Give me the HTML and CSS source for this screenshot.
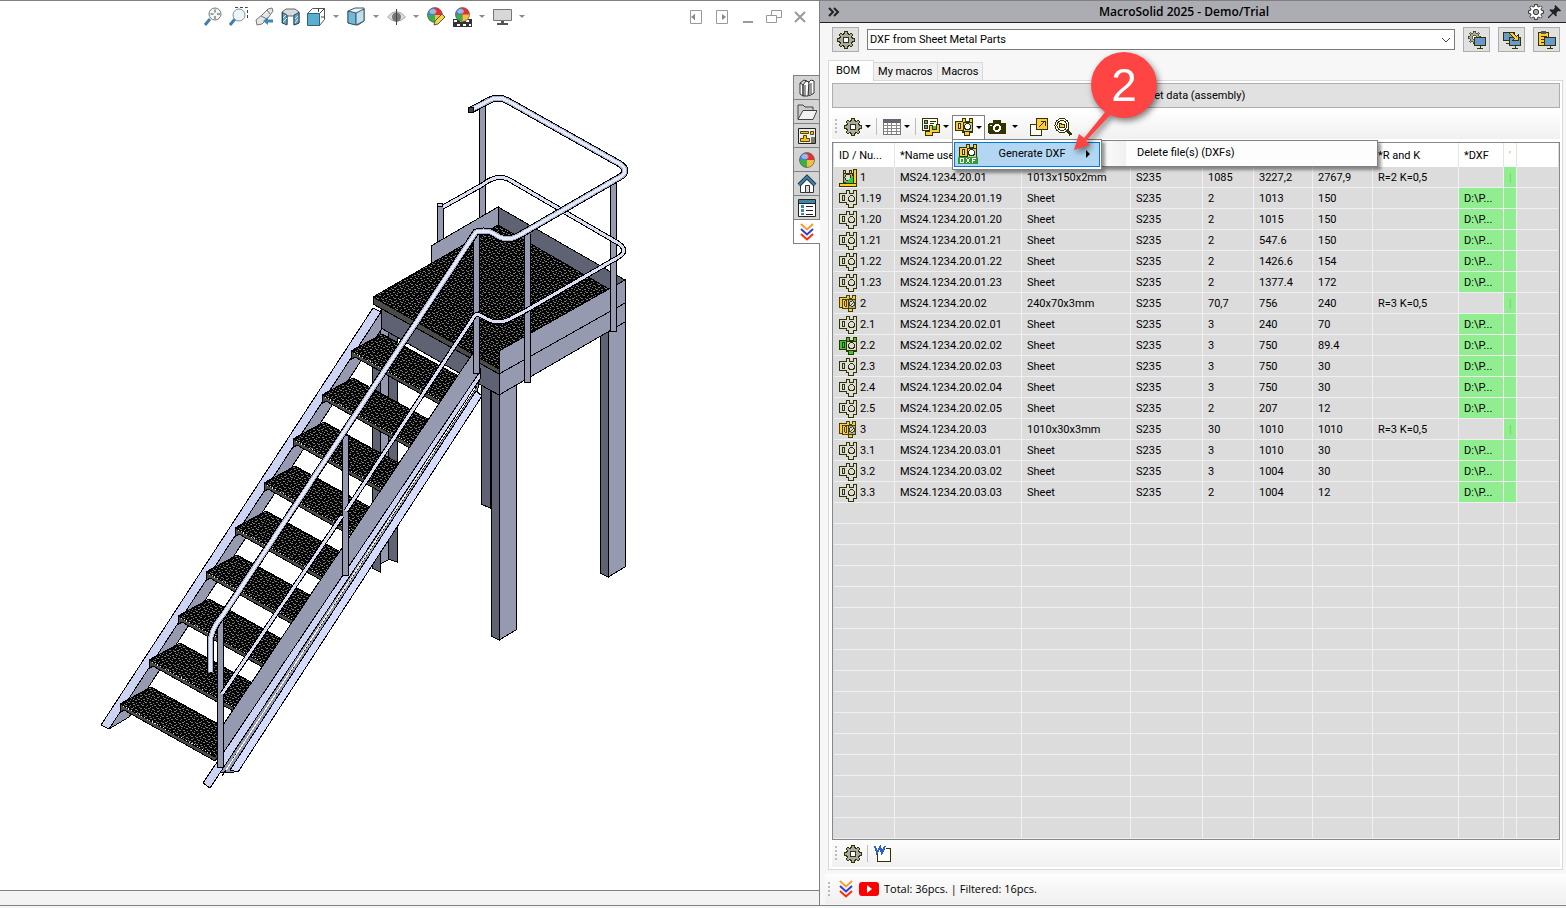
FILE: index.html
```html
<!DOCTYPE html>
<html lang="en">
<head>
  <meta charset="UTF-8">
  <title>MacroSolid 2025 - Demo/Trial</title>
  <link rel="stylesheet" href="styles.css">
</head>
<body>
  <svg class="defs" aria-hidden="true">
    <defs>
      <symbol id="gear" viewBox="0 0 18 18">
        <path fill="#a9a9a9" stroke="#333300" d="M7.500 2.500V.5h3v2l2 1 1.500-1.500 2 2-1.500 1.500 1 2h2v3h-2l-1 2 1.500 1.500-2 2-1.500-1.500-2 1v2h-3v-2l-2-1L4 16l-2-2 1.500-1.500-1-2h-2v-3h2l1-2L2 4l2-2 1.500 1.500z"/>
        <circle cx="9" cy="9" r="3" fill="#fff" stroke="#333300"/>
      </symbol>
      <symbol id="part" viewBox="0 0 18 18">
        <path class="body" d="M.5 3.500h7v-3h3v3h4v-3h3v14h-3v3h-5v-3h-2v-2h-7z"/>
        <path class="line" d="M3.500 5.500h2v5h-2z"/>
        <circle class="line" cx="12.500" cy="8.500" r="3"/>
      </symbol>
      <symbol id="part-green" viewBox="0 0 18 18">
        <path fill="#33cc33" stroke="#333300" d="M.5 3.500h7v-3h3v3h4v-3h3v14h-3v3h-5v-3h-2v-2h-7z"/>
        <path fill="#dcdcdc" stroke="#333300" d="M7.500 4.500h10v9h-10z"/>
        <path class="line" d="M3.500 5.500h2v5h-2z"/>
        <circle class="line" cx="12.500" cy="8.500" r="3"/>
      </symbol>
      <symbol id="part-group" viewBox="0 0 20 20">
        <path fill="#ffcc33" stroke="#333300" d="M.5 2.500h8v-2h3v3h3v-3h4v14h-3v4h-5v-4h-7v-1h-3z"/>
        <path fill="none" stroke="#333300" d="M3.500 14V4.500h6M6.500 6.500h2v6h-2z"/>
        <path fill="#a9a9a9" stroke="#333300" d="M10.500 4.500h8v10h-8z"/>
        <circle cx="14.500" cy="9.500" r="3" fill="#dcdcdc" stroke="#333300"/>
        <path stroke="#333300" d="M13 11l3-3"/>
      </symbol>
      <symbol id="part-main" viewBox="0 0 18 18">
        <path fill="#a9a9a9" stroke="#333300" d="M4.500 4.500h9v9h-9z"/>
        <path fill="#ffcc33" stroke="#333300" d="M4.500 1.500h2v3h-2zM10.500 1.500h2v3h-2zM14.500.5h3v14h-3zM.5 14.500h17v3H.5z"/>
        <path fill="#33cc33" d="M14 6v8H6z"/>
        <circle cx="9" cy="8.500" r="3" fill="#dcdcdc" stroke="#333300"/>
        <path fill="#33cc33" d="M12 8v4H8z"/>
      </symbol>
      <symbol id="dxf-part" viewBox="0 0 18 18">
        <path fill="#ffcc33" stroke="#333300" d="M.5 3.500h7v-3h3v3h4v-3h3v14h-3v3h-5v-3h-2v-2h-7z"/>
        <path fill="#c8c8b8" stroke="#333300" d="M8.500 4.500h9v9h-9z"/>
        <path fill="#ffe9a0" stroke="#333300" d="M3.500 5.500h2v5h-2z"/>
        <circle cx="12.500" cy="8.500" r="3" fill="#fff" stroke="#333300"/>
      </symbol>
      <symbol id="chevrons" viewBox="0 0 14 18">
        <path fill="none" stroke="#ff9a2e" stroke-width="2" d="M1 1l6 5.500L13 1"/>
        <path fill="none" stroke="#2b3fd0" stroke-width="2" d="M1 6l6 5.500L13 6"/>
        <path fill="none" stroke="#ff2a0a" stroke-width="2" d="M1 11l6 5.500L13 11"/>
      </symbol>
      <symbol id="ball" viewBox="0 0 16 16">
        <circle cx="8" cy="8" r="7.500" fill="#d33"/>
        <path fill="#3f86d8" d="M8 8L7.500.5A7.500 7.500 0 0 0 .5 8z"/>
        <path fill="#36b04a" d="M8 8H.5A7.500 7.500 0 0 0 8 15.500z"/>
        <path fill="#f0c040" d="M8 8v7.500A7.500 7.500 0 0 0 15.500 8z"/>
        <ellipse cx="6" cy="4.500" rx="3.500" ry="2.500" fill="#fff" opacity=".45"/>
        <circle cx="8" cy="8" r="7.500" fill="none" stroke="#555" opacity=".6"/>
      </symbol>
      <symbol id="monitor" viewBox="0 0 12 12">
        <path fill="#6699cc" stroke="#333300" d="M.5.5h11v8H.5z"/>
        <path fill="none" stroke="#333300" d="M6 9v2M3 11.500h6"/>
      </symbol>
      <pattern id="grating" width="17" height="14" patternUnits="userSpaceOnUse">
        <rect width="17" height="14" fill="#060606"/>
        <path stroke="#7d7d7d" fill="none" d="M0 1.500h2M4 .5h1M5 1.500h2M10 1.500h1M13 .5h2M9 2.500h1M15 2.500h1M2 3.500h1M3 4.500h2M7 4.500h1M11 4.500h2M13 3.500h1M8 5.500h2M15 5.500h2M0 6.500h1M5 6.500h1M12 6.500h1M3 7.500h2M9 7.500h1M10 8.500h2M14 7.500h1M0 8.500h1M1 9.500h2M6 9.500h2M13 9.500h1M15 10.500h2M4 10.500h1M10 10.500h1M7 11.500h1M8 12.500h2M2 12.500h2M12 12.500h2M6 13.500h1M16 13.500h1"/>
      </pattern>
      <!-- one stair tread, repeated up the flight -->
      <g id="tread">
        <path fill="#4b4b48" stroke="#000" d="M0 0v9l4-3 91 51 6-9z"/>
        <path fill="url(#grating)" stroke="#000" d="M0 0l31-17 80 44-16 26z"/>
        <path fill="none" stroke="#e4e4da" stroke-dasharray="1 2" d="M3 2l90 49"/>
      </g>
    </defs>
  </svg>

  <div class="app">
    <main class="viewport">
      <div class="view-bar">
        <div class="view-tools">
          <button class="view-btn" aria-label="Zoom to fit"><svg viewBox="0 0 19 20"><path stroke="#3f7fae" stroke-width="3" d="M2 18l5-6"/><circle cx="12" cy="7" r="6" fill="#f2f6f8" stroke="#777"/><path stroke="#444" fill="none" d="M12 2.500v3M12 9v3M7.500 7h3M14 7h3"/></svg></button>
          <button class="view-btn" aria-label="Zoom to area"><svg viewBox="0 0 19 20"><path fill="none" stroke="#444" stroke-dasharray="3 2" d="M6 .5h12.500v11"/><path stroke="#3f7fae" stroke-width="3" d="M1 18l5-6"/><circle cx="10" cy="8" r="6" fill="#edf5fa" stroke="#8a9499"/></svg></button>
          <button class="view-btn" aria-label="Previous view"><svg viewBox="0 0 19 20"><path fill="#e6e6e6" stroke="#777" d="M1 13l6-5 6-6 4-1 1 3-5 7-6 6-5 1z"/><path stroke="#777" d="M6 9l6 3M12 3l3 4"/><path fill="#3f86b4" d="M18 12.500h-5V10l-5 4 5 4v-2.500h5z"/></svg></button>
          <button class="view-btn" aria-label="Section view"><svg viewBox="0 0 19 20"><path fill="#d8dadb" stroke="#666" d="M1 5l4-3h9l4 3v11l-5 2V9H6v8l-5-1z"/><path fill="#5aa9cd" stroke="#345" d="M1.500 5.500L6 8v10l-4.500-2zM13 8l5-2.500V16l-5 2z"/><path stroke="#cfe8f3" d="M2 11l3-3M2 15l4-4M14 12l3-3M14 16l3-4"/></svg></button>
          <button class="view-btn" aria-label="View orientation"><svg viewBox="0 0 19 20"><path fill="#fff" stroke="#555" d="M.5 6.500l5-5h12v11l-5 6"/><path fill="#5aaed2" stroke="#2e617c" d="M.5 6.500h12v12H.5z"/><path fill="none" stroke="#444" d="M12.500 6.500l5-5M11.500 1v4M14 10h4"/></svg></button>
          <button class="drop-btn" aria-label="View orientation options"></button>
          <button class="view-btn" aria-label="Display style"><svg viewBox="0 0 19 20"><path fill="#e8f4f9" stroke="#456" d="M1 4l7-3h9v13l-6 4-10-2z"/><path fill="#6cbbdb" stroke="#456" d="M1 4l8 2v12l-8-2z"/><path fill="#bfe0ee" stroke="#456" d="M9 6l8-4v12l-8 4z"/></svg></button>
          <button class="drop-btn" aria-label="Display style options"></button>
          <button class="view-btn" aria-label="Hide/show items"><svg viewBox="0 0 19 20"><path fill="#ddd" stroke="#aaa" d="M.5 10q9-11 18 0-9 9-18 0z"/><circle cx="9.500" cy="10" r="4.500" fill="#777"/><path stroke="#444" d="M9.500 2v16"/></svg></button>
          <button class="drop-btn" aria-label="Hide/show options"></button>
          <button class="view-btn" aria-label="Edit appearance"><svg viewBox="0 0 19 20"><use href="#ball" width="16" height="16"/><path fill="#f5d34d" stroke="#554" d="M7 18l1-4 7-7 3 3-7 7z"/></svg></button>
          <button class="view-btn" aria-label="Apply scene"><svg viewBox="0 0 19 20"><path fill="#333" d="M0 12h19v8H0z"/><path stroke="#fff" stroke-width="2" stroke-dasharray="3 3" d="M1 14h18M4 18h14"/><use href="#ball" x="2" width="15" height="15"/></svg></button>
          <button class="drop-btn" aria-label="Scene options"></button>
          <button class="view-btn" aria-label="View settings"><svg viewBox="0 0 19 20"><path fill="#d5d7d8" stroke="#777" d="M.5 2.500h18v11H.5z"/><path fill="#555" d="M8 14h3v2h4v2H4v-2h4z"/></svg></button>
          <button class="drop-btn" aria-label="View settings options"></button>
        </div>
        <div class="window-tools">
          <button class="win-btn" aria-label="Previous window"><svg viewBox="0 0 16 16"><path d="M2.500 1.500h11v13h-11zM6.500 5v6"/><path class="solid" d="M3 8l4-3v6z"/></svg></button>
          <button class="win-btn" aria-label="Next window"><svg viewBox="0 0 16 16"><path d="M2.500 1.500h11v13h-11z"/><path class="solid" d="M12 8L8 5v6z"/></svg></button>
          <button class="win-btn" aria-label="Minimize"><svg viewBox="0 0 16 16"><path stroke-width="2" d="M3 13h10"/></svg></button>
          <button class="win-btn" aria-label="Restore"><svg viewBox="0 0 16 16"><path d="M.5 6.500h10v7H.5zM5.500 6V1.500h10v7h-5"/></svg></button>
          <button class="win-btn" aria-label="Close"><svg viewBox="0 0 16 16"><path stroke-width="2" d="M3 3l10 10M13 3L3 13"/></svg></button>
        </div>
      </div>

      <div class="canvas">
        <svg class="model" viewBox="0 32 819 858" role="img" aria-label="Staircase with platform">
          <!-- legs -->
          <g class="edge">
            <path fill="#5f6273" d="M372 320h8v252l-8-4z"/>
            <path fill="#959ab0" d="M380 320h8v240l-8 4z"/>
            <path fill="#5f6273" d="M388 320h9v242l-9-3z"/>
            <path fill="#5f6273" d="M481 380h9v128l-9-4z"/>
            <path fill="#5f6273" d="M600 330h8v247l-8-4z"/>
            <path fill="#959ab0" d="M608 325l17-10v252l-17 10z"/>
            <path fill="#5f6273" d="M491 385h8v255l-8-4z"/>
            <path fill="#959ab0" d="M499 385h17v245l-17 10z"/>
          </g>

          <g class="pole"><path d="M482 104v120M440 206v50"/></g>
          <g class="pole-fill"><path d="M482 104v120M440 206v50"/></g>

          <!-- platform -->
          <g class="edge">
            <path fill="#959ab0" d="M431 246l67-39v19l-67 38z"/>
            <path fill="#5f6273" d="M498 207l127 73-16 10-111-65z"/>
            <path fill="#5f6273" d="M381 304l118 70v21l-38-21-80-46z"/>
            <path fill="#4b4b48" d="M373 297v7l126 70v-6z"/>
            <path fill="url(#grating)" d="M373 297l125-72 111 64-110 80z"/>
            <path fill="#959ab0" d="M499 351l126-71v23l-126 71z"/>
            <path fill="#959ab0" d="M499 374l126-71v19l-126 73z"/>
          </g>

          <!-- left stringer -->
          <g class="edge">
            <path fill="#959ab0" d="M109 729l20-12 252-387v-20z"/>
            <path fill="#cdd3f2" d="M101 725L373 308l8 4-272 417z"/>
          </g>

          <use href="#tread" x="351" y="351"/>
          <use href="#tread" x="322" y="395"/>
          <use href="#tread" x="293" y="439"/>
          <use href="#tread" x="264" y="483"/>
          <use href="#tread" x="235" y="528"/>
          <use href="#tread" x="206" y="572"/>
          <use href="#tread" x="178" y="616"/>
          <use href="#tread" x="149" y="660"/>
          <use href="#tread" x="120" y="704"/>

          <!-- right stringer -->
          <g class="edge">
            <path fill="#959ab0" d="M219 731L473 353l8 17-4 24-243 378h-15z"/>
            <path fill="#cdd3f2" d="M203 783L481 370l-1 9-270 409z"/>
            <path fill="none" d="M222 776L477 386"/>
            <path fill="#d5dcfb" d="M230 770L476 391l6 5-244 376z"/>
            <path fill="none" stroke="#fff" d="M226 770L475 388"/>
          </g>

          <!-- posts and rails, dark outline first, then the lit tube -->
          <g class="pole"><path d="M613 182v150M527 234v149M476 234v140M345 436v140M220 620v148"/></g>
          <g class="pole-fill"><path d="M613 182v149M527 234v148M476 234v139M345 436v139M220 620v147"/></g>
          <g class="rail-thin">
            <path id="mid-rail" d="M443 207l39-22 6-4q10-6 20-2l110 64q12 8-1 15l-90 52-17 9q-12 6-23 0l-9-5-3 1-129 196M342 516L222 694"/>
          </g>
          <g class="rail-thin-fill"><use href="#mid-rail"/></g>
          <g class="rail">
            <path id="top-rail" d="M471 110l17-9q10-6 20 0l112 63q10 7 0 13l-102 59q-12 6-22-1-8-6-20-3L223 615q-13 15-13 30v27"/>
          </g>
          <g class="rail-body"><use href="#top-rail"/></g>
          <g class="rail-light"><use href="#top-rail"/></g>
          <circle cx="471" cy="110" r="3" fill="#444" stroke="#000"/>
          <ellipse cx="440" cy="205" rx="3" ry="2" fill="#cdd3f2" stroke="#000"/>
        </svg>

        <nav class="side-tabs">
          <button aria-label="Design library"><svg viewBox="0 0 20 20"><path fill="#fff" stroke="#333" d="M3 5l3 2v11l-3-2zM6 7l3-4 3 1-1 14-5 0zM11 5l3-3 3 1v12l-5 3"/><path fill="none" stroke="#333" d="M3 5l4-3 3 1M8 7v11M12 6v12M14 5v11"/></svg></button>
          <button aria-label="File explorer"><svg viewBox="0 0 20 20"><path fill="#ccc" stroke="#444" d="M1 17V3h5l2 2h8v3"/><path fill="#f2f2f2" stroke="#444" d="M1 17.500L6 8.500h14l-4 9z"/></svg></button>
          <button aria-label="View palette"><svg viewBox="0 0 20 20"><path fill="#eee" stroke="#222" d="M1.500 2.500h17v15h-17z"/><path fill="#f5c518" stroke="#554400" d="M3.500 5.500h8v2h-8zM13.500 5.500h3v3h-3zM6.500 9.500h3v3h3v3h-9v-3h3z"/><path fill="#777" d="M14 11h4v6h-4z"/></svg></button>
          <button aria-label="Appearances"><svg viewBox="0 0 20 20"><use href="#ball" x="2" y="2" width="16" height="16"/></svg></button>
          <button aria-label="Home"><svg viewBox="0 0 20 20"><path fill="#fff" stroke="#333" d="M3.500 9.500L10 4l6.500 5.500v9h-13z"/><path fill="#ddd" stroke="#333" d="M8.500 11.500h4v7h-4z"/><path fill="none" stroke="#234" stroke-width="4" d="M2 11l8-8 8 8"/><path fill="none" stroke="#3c86a8" stroke-width="2" d="M2 11l8-8 8 8"/></svg></button>
          <button aria-label="Custom properties"><svg viewBox="0 0 20 20"><path fill="#fff" stroke="#222" d="M1.500 1.500h17v17h-17z"/><path fill="#3c86a8" d="M2 2h16v3H2zM4 7h3v3H4zM4 11h3v3H4zM4 15h3v2H4z"/><path stroke="#222" d="M2 5.500h16M9 8.500h7M9 12.500h7M9 16.500h7"/></svg></button>
          <button class="current" aria-label="MacroSolid"><svg viewBox="0 0 20 20"><use href="#chevrons" x="3" y="1" width="14" height="18"/></svg></button>
        </nav>
      </div>
      <div class="view-footer"></div>
    </main>

    <aside class="panel">
      <header class="title-bar">
        <button class="plain" aria-label="Collapse"><svg viewBox="0 0 12 10"><path fill="none" stroke="#222" stroke-width="2" d="M1 1l4 4-4 4M6 1l4 4-4 4"/></svg></button>
        <h1>MacroSolid 2025 - Demo/Trial</h1>
        <button class="plain" aria-label="Options"><svg class="cog" viewBox="0 0 18 18"><path fill="#fff" stroke="#222" d="M7.500 2.500V.5h3v2l2 1 1.500-1.500 2 2-1.500 1.500 1 2h2v3h-2l-1 2 1.500 1.500-2 2-1.500-1.500-2 1v2h-3v-2l-2-1L4 16l-2-2 1.500-1.500-1-2h-2v-3h2l1-2L2 4l2-2 1.500 1.500z"/><circle cx="9" cy="9" r="3" fill="#abadb3" stroke="#222"/></svg></button>
        <button class="plain" aria-label="Pin"><svg class="pin" viewBox="0 0 14 14"><path fill="#222" d="M8 0l6 6-1 1-2-.5-2 2 .5 3-1 1L5.500 9.500 1 14H0v-1l4.500-4.500L1.500 5.500l1-1 3 .5 2-2L7 1z"/></svg></button>
      </header>

      <div class="task-row">
        <button class="tool-square" aria-label="Macro settings"><svg class="i18"><use href="#gear"/></svg></button>
        <div class="combo">
          <select aria-label="Macro"><option>DXF from Sheet Metal Parts</option></select>
          <svg viewBox="0 0 10 6"><path fill="none" stroke="#444" d="M1 1l4 4 4-4"/></svg>
        </div>
        <button class="tool-square" aria-label="Screen settings"><svg viewBox="0 0 18 18" class="i18"><use href="#gear" width="13" height="13"/><use href="#monitor" x="6" y="6" width="12" height="12"/></svg></button>
        <button class="tool-square" aria-label="Send to screen"><svg viewBox="0 0 18 18" class="i18"><use href="#monitor" y="1" width="12" height="12"/><use href="#monitor" x="6" y="6" width="12" height="12"/><path fill="#ffcc33" stroke="#333300" d="M6.500 1.500h3l4 4 2-2v6h-6l2-2-5-5z"/></svg></button>
        <button class="tool-square" aria-label="Paste to screen"><svg viewBox="0 0 18 18" class="i18"><path fill="#ffcc33" stroke="#333300" d="M.5 1.500h10v13H.5z"/><path fill="#555" d="M3 0h5v3H3z"/><path stroke="#333300" d="M3 5.500h6M3 8.500h4M3 11.500h3"/><use href="#monitor" x="6" y="6" width="12" height="12"/></svg></button>
      </div>

      <div class="tabs" role="tablist">
        <button class="tab active" role="tab" aria-selected="true">BOM</button>
        <button class="tab" role="tab">My macros</button>
        <button class="tab" role="tab">Macros</button>
      </div>

      <section class="tab-page">
        <button class="get-data">Get data (assembly)</button>

        <div class="toolbar">
          <span class="grip"></span>
          <button class="tool has-drop" aria-label="Settings"><svg class="i18"><use href="#gear"/></svg></button>
          <span class="sep"></span>
          <button class="tool has-drop" aria-label="Table"><svg class="i18" viewBox="0 0 18 18"><path fill="#fff" stroke="#777" d="M.5 1.500h17v15H.5z"/><path fill="#66666e" d="M0 1h18v4H0z"/><path stroke="#888" d="M1 7.500h16M1 10.500h16M1 13.500h16M4.500 5v11M8.500 5v11M13.500 5v11"/></svg></button>
          <span class="sep"></span>
          <button class="tool has-drop" aria-label="Part list"><svg class="i18" viewBox="0 0 18 18"><path fill="#fff" stroke="#333300" d="M.5.5h15v12H.5z"/><path fill="#6699cc" stroke="#333300" d="M2.500 2.500h3v3h-3zM2.500 7.500h3v3h-3z"/><path stroke="#333300" d="M8 3.500h6M8 5.500h4"/><path fill="#33cc33" d="M10 8h5v4h-5z"/><path fill="#ffcc33" stroke="#333300" d="M7.500 7.500h3v4h4v-5h3v8h-7v3h-7v-4h4z"/></svg></button>
          <div class="drop-host">
            <button class="tool has-drop open" aria-label="DXF" aria-expanded="true"><svg class="i18"><use href="#dxf-part"/></svg></button>
            <div class="menu">
              <button class="menu-item">
                <svg viewBox="0 0 20 20"><use href="#dxf-part" x="1" width="18" height="18"/><path fill="#2f9e2f" d="M0 13h20v7H0z"/><path fill="none" stroke="#fff" d="M2 14.500h3.500v4H2zM8 14l4 5M12 14l-4 5M14.500 19v-4.500H18M14.500 16.500H17"/></svg>
                <span>Generate DXF</span>
                <i></i>
              </button>
            </div>
            <div class="submenu">
              <button class="menu-item">Delete file(s) (DXFs)</button>
            </div>
          </div>
          <button class="tool has-drop wide" aria-label="Camera"><svg class="i18" viewBox="0 0 18 18"><path fill="#333300" d="M5 2h8v3h4l1 1v9l-1 1H1l-1-1V6l1-1h4z"/><circle cx="9" cy="10" r="4" fill="#fff"/><circle cx="9" cy="10" r="2" fill="#333300"/><path fill="#fff" d="M2 7h2v1H2z"/></svg></button>
          <button class="tool" aria-label="Open folder"><svg class="i18" viewBox="0 0 18 18"><path fill="#fff" stroke="#333300" d="M.5 6.500h11v11H.5z"/><path fill="#ffcc33" stroke="#333300" d="M6.500.5h11v11h-11z"/><path fill="none" stroke="#333300" d="M9 9l6-6M11 3.500h4v4"/></svg></button>
          <button class="tool" aria-label="Find part"><svg class="i18" viewBox="0 0 18 18"><circle cx="8" cy="7.500" r="7" fill="#fff" stroke="#333300"/><circle cx="8" cy="7.500" r="5" fill="#fff" stroke="#333300"/><path fill="#ffcc33" stroke="#333300" d="M5.500 9.500v-4h2v1h3v3z"/><path stroke="#333300" stroke-width="3" d="M13 12l4 5"/></svg></button>
        </div>

        <div class="grid">
          <table>
            <colgroup>
              <col class="c-id"><col class="c-name"><col class="c-desc"><col class="c-mat"><col class="c-qty"><col class="c-len"><col class="c-wid"><col class="c-rk"><col class="c-dxf"><col class="c-flag"><col>
            </colgroup>
            <thead>
              <tr><th>ID / Nu...</th><th>*Name used</th><th></th><th></th><th></th><th></th><th></th><th>*R and K</th><th>*DXF</th><th class="flag">'</th><th></th></tr>
            </thead>
            <tbody id="rows"></tbody>
          </table>
        </div>

        <div class="toolbar bottom">
          <span class="grip"></span>
          <button class="tool" aria-label="List settings"><svg class="i18"><use href="#gear"/></svg></button>
          <span class="sep"></span>
          <button class="tool" aria-label="Export to Word"><svg class="i18" viewBox="0 0 18 18"><path fill="#fff" stroke="#333300" d="M3.500 3.500h13v13h-13z"/><path fill="#fff" d="M0 0h12v9H0z"/><path fill="none" stroke="#2f5fc8" stroke-width="2" d="M1 1l2 7 3-6 2 6 3-7"/></svg></button>
        </div>
      </section>

      <footer class="status">
        <span class="grip"></span>
        <a href="#" aria-label="MacroSolid"><svg class="brand"><use href="#chevrons"/></svg></a>
        <a href="#" aria-label="YouTube"><svg class="tube" viewBox="0 0 20 14"><rect width="20" height="14" rx="3" fill="#f00"/><path fill="#fff" d="M8 3l5 4-5 4z"/></svg></a>
        <span>Total: 36pcs. | Filtered: 16pcs.</span>
      </footer>

      <div class="callout">
        <svg viewBox="0 0 90 110"><path fill="#ff4444" d="M32 59l-22 27-5-4-5 16 16-5-4-4 26-28z"/></svg>
        <span>2</span>
      </div>
    </aside>
  </div>
  <script src="script.js"></script>
</body>
</html>
```
FILE: styles.css
```css
* {
  box-sizing: border-box;
}

body {
  margin: 0;
  background: #fff;
  color: #000;
  font-family: Roboto, "Liberation Sans", sans-serif;
  font-size: 11px;
  line-height: 16px;
}

button {
  margin: 0;
  padding: 0;
  border: none;
  background: none;
  color: inherit;
  font: inherit;
}

svg {
  display: block;
  flex: none;
}

.defs {
  position: absolute;
  width: 0;
  height: 0;
}

.i18 {
  width: 18px;
  height: 18px;
  shape-rendering: crispEdges;
}

.app {
  display: grid;
  grid-template-columns: 820fr 746fr;
  height: 100vh;
  border-top: 1px solid #808080;
  background: #f7f7f7;
}

/* 3D view */
.viewport {
  display: flex;
  flex-direction: column;
  min-width: 0;
  margin-bottom: 2px;
  border-right: 1px solid #808080;
  border-bottom: 1px solid #808080;
  background: #fff;
}

.view-bar {
  display: flex;
  justify-content: space-between;
  align-items: center;
  height: 31px;
  padding-left: 203px;
  padding-right: 11px;
}

.view-tools,
.window-tools {
  display: flex;
  align-items: center;
}

.window-tools {
  gap: 10px;
}

.view-btn {
  width: 26px;
}

.view-btn svg {
  width: 19px;
  height: 20px;
}

.drop-btn {
  width: 14px;
  height: 20px;
}

.drop-btn::before {
  content: "";
  display: block;
  width: 0;
  border: 3px solid transparent;
  border-top-color: #888;
  border-bottom: none;
}

.win-btn svg {
  width: 16px;
  height: 16px;
  fill: none;
  stroke: #999;
}

.win-btn .solid {
  fill: #888;
  stroke: none;
}

.canvas {
  position: relative;
  flex: 1;
  min-height: 0;
}

.model {
  width: 100%;
  height: 100%;
  shape-rendering: crispEdges;
}

.edge path {
  stroke: #000;
}

.edge path[stroke="#fff"] {
  stroke: #fff;
}

.pole,
.pole-fill,
.rail,
.rail-body,
.rail-light,
.rail-thin,
.rail-thin-fill {
  fill: none;
  stroke: #000;
  stroke-width: 7;
}

.pole-fill {
  stroke: #959ab0;
  stroke-width: 5;
}

.rail-body {
  stroke: #a9afc6;
  stroke-width: 5;
}

.rail-light {
  stroke: #e3e8fb;
  stroke-width: 3;
}

.rail-thin {
  stroke-width: 5;
}

.rail-thin-fill {
  stroke: #d9def2;
  stroke-width: 3;
}

.side-tabs {
  position: absolute;
  top: 43px;
  right: -1px;
  display: flex;
  flex-direction: column;
  width: 27px;
  border: 1px solid #808080;
  border-right: none;
}

.side-tabs button {
  display: flex;
  align-items: center;
  justify-content: center;
  height: 24px;
  border-right: 1px solid #808080;
  border-bottom: 1px solid #808080;
  background: #d4d4d4;
}

.side-tabs .current {
  height: 23px;
  border: none;
  background: #fff;
}

.side-tabs svg {
  width: 20px;
  height: 20px;
}

.view-footer {
  height: 15px;
  border-top: 1px solid #808080;
  background: #f3f3f3;
}

/* task pane */
.panel {
  position: relative;
  display: flex;
  flex-direction: column;
  min-width: 0;
  margin-bottom: 2px;
  border-bottom: 1px solid #808080;
}

.title-bar {
  display: flex;
  align-items: center;
  gap: 4px;
  height: 22px;
  padding: 0 5px 0 8px;
  border-bottom: 1px solid #222;
  background: #abadb3;
}

.title-bar h1 {
  flex: 1;
  margin: 0;
  font-family: "Open Sans", sans-serif;
  font-size: 12px;
  font-weight: 600;
  text-align: center;
}

.plain svg {
  width: 12px;
  height: 10px;
}

.plain .cog {
  width: 16px;
  height: 16px;
}

.plain .pin {
  width: 13px;
  height: 13px;
}

.task-row {
  display: flex;
  align-items: center;
  gap: 8px;
  padding: 4px 6px 0 12px;
}

.tool-square {
  display: flex;
  align-items: center;
  justify-content: center;
  width: 27px;
  height: 25px;
  border: 1px solid #adadad;
  background: #e1e1e1;
}

.combo {
  position: relative;
  flex: 1;
}

.combo select {
  display: block;
  width: 100%;
  height: 21px;
  padding: 0 2px;
  border: 1px solid #7a7a7a;
  border-radius: 0;
  background: #fff;
  color: #000;
  font: inherit;
  appearance: none;
}

.combo svg {
  position: absolute;
  top: 8px;
  right: 4px;
  width: 10px;
  height: 6px;
}

.tabs {
  display: flex;
  align-items: flex-end;
  margin-top: 8px;
  padding-left: 8px;
}

.tab {
  height: 18px;
  padding: 0 4px;
  border: 1px solid #d9d9d9;
  border-bottom: none;
  border-left: none;
  background: #f0f0f0;
}

.tab.active {
  position: relative;
  height: 21px;
  margin-bottom: -1px;
  padding: 0 13px 1px 7px;
  border-left: 1px solid #d9d9d9;
  background: #fff;
}

.tab-page {
  display: flex;
  flex: 1;
  flex-direction: column;
  min-height: 0;
  margin: 0 3px 0 8px;
  padding: 2px 2px 2px 3px;
  border: 1px solid #d9d9d9;
  background: #fff;
}

.get-data {
  flex: none;
  height: 25px;
  border: 1px solid #adadad;
  background: #e1e1e1;
}

.toolbar {
  display: flex;
  align-items: center;
  height: 25px;
  margin: 6px 0 3px;
  background: linear-gradient(#fdfdfd, #f0f0f0);
}

.toolbar.bottom {
  height: 27px;
  margin: 0;
}

.grip {
  width: 2px;
  height: 15px;
  margin: 0 4px 0 3px;
  background: repeating-linear-gradient(#bbb 0 2px, transparent 2px 4px);
}

.sep {
  width: 1px;
  height: 17px;
  margin: 0 3px 0 2px;
  background: #bdbdbd;
}

.tool {
  display: flex;
  align-items: center;
  width: 24px;
  height: 24px;
  padding: 0 3px;
}

.has-drop {
  justify-content: space-between;
  width: 33px;
}

.has-drop.wide {
  width: 42px;
  padding-right: 9px;
}

.has-drop::after {
  content: "";
  border: 3px solid transparent;
  border-top-color: #000;
  border-bottom: none;
}

.tool.open {
  padding: 0 2px;
  border: 1px solid #808080;
  border-bottom: none;
  background: #fff;
}

.drop-host {
  position: relative;
}

.menu,
.submenu {
  position: absolute;
  top: 24px;
  left: 0;
  z-index: 1;
  width: 150px;
  padding: 2px 1px;
  border: 1px solid #808080;
  background: #fff;
  box-shadow: 3px 3px 3px rgba(0, 0, 0, 0.4);
}

.menu-item {
  display: flex;
  align-items: center;
  width: 100%;
  height: 25px;
}

.menu .menu-item {
  justify-content: space-between;
  padding: 0 9px 0 3px;
  border: 1px solid #0078d7;
  background: #b3d7f3;
}

.menu svg {
  width: 20px;
  height: 20px;
  shape-rendering: crispEdges;
}

.menu i {
  border: 4px solid transparent;
  border-right: none;
  border-left-color: #000;
}

.submenu {
  top: 25px;
  left: 149px;
  z-index: 0;
  width: 277px;
  padding: 0;
}

.submenu .menu-item {
  padding-left: 35px;
  background: linear-gradient(90deg, #fcfcfc, #f0f0f0 24px, #fdfdfd 24px);
}

.grid {
  flex: 1;
  min-height: 0;
  overflow: hidden;
  padding: 0 1px;
  border: 1px solid #828790;
  background: #dcdcdc;
}

.grid table {
  width: 100%;
  border-collapse: separate;
  border-spacing: 0;
  table-layout: fixed;
}

.c-id { width: 61px; }
.c-name { width: 127px; }
.c-desc { width: 109px; }
.c-mat { width: 72px; }
.c-qty { width: 51px; }
.c-len { width: 59px; }
.c-wid { width: 60px; }
.c-rk { width: 86px; }
.c-dxf { width: 45px; }
.c-flag { width: 13px; }

.grid th,
.grid td {
  height: 21px;
  padding: 1px 0 0 5px;
  border-right: 1px solid #f0f0f0;
  border-bottom: 1px solid #f0f0f0;
  font-weight: normal;
  text-align: left;
  white-space: nowrap;
  overflow: hidden;
}

.grid th {
  height: 24px;
  border-right-color: #e5e5e5;
  border-bottom: none;
  background: #fff;
}

.grid th:last-child,
.grid td:last-child {
  border-right: none;
}

.grid .done {
  background: #90ee90;
}

.grid .flag {
  color: #c8a050;
}

.grid td.flag {
  color: #7ccf50;
}

.id-cell {
  display: flex;
  align-items: center;
  gap: 3px;
}

.id-cell svg {
  width: 18px;
  height: 18px;
  shape-rendering: crispEdges;
}

.body,
.line {
  fill: none;
  stroke: #333300;
}

.status {
  display: flex;
  align-items: center;
  height: 30px;
  margin: 4px 0 1px 5px;
  background: linear-gradient(#fdfdfd, #f0f0f0);
  font-family: "Open Sans", sans-serif;
}

.status a {
  margin-right: 5px;
}

.status a:first-of-type {
  margin-left: 4px;
}

.brand {
  width: 16px;
  height: 18px;
}

.tube {
  width: 20px;
  height: 14px;
}

/* numbered marker over the menu */
.callout {
  position: absolute;
  top: 51px;
  left: 254px;
  z-index: 2;
  width: 90px;
  height: 110px;
  filter: drop-shadow(2px 3px 3px rgba(0, 0, 0, 0.5));
}

.callout svg {
  width: 90px;
  height: 110px;
}

.callout span {
  position: absolute;
  top: 0;
  left: 17px;
  width: 66px;
  height: 66px;
  border-radius: 50%;
  background: #ff4444;
  color: #fff;
  font-family: "Liberation Sans", sans-serif;
  font-size: 46px;
  line-height: 66px;
  text-align: center;
}
```
FILE: script.js
```js
// icon, id, name, description, material, qty, length, width, R and K
const parts = [
  ['part-main', '1', 'MS24.1234.20.01', '1013x150x2mm', 'S235', '1085', '3227,2', '2767,9', 'R=2 K=0,5'],
  ['part', '1.19', 'MS24.1234.20.01.19', 'Sheet', 'S235', '2', '1013', '150', ''],
  ['part', '1.20', 'MS24.1234.20.01.20', 'Sheet', 'S235', '2', '1015', '150', ''],
  ['part', '1.21', 'MS24.1234.20.01.21', 'Sheet', 'S235', '2', '547.6', '150', ''],
  ['part', '1.22', 'MS24.1234.20.01.22', 'Sheet', 'S235', '2', '1426.6', '154', ''],
  ['part', '1.23', 'MS24.1234.20.01.23', 'Sheet', 'S235', '2', '1377.4', '172', ''],
  ['part-group', '2', 'MS24.1234.20.02', '240x70x3mm', 'S235', '70,7', '756', '240', 'R=3 K=0,5'],
  ['part', '2.1', 'MS24.1234.20.02.01', 'Sheet', 'S235', '3', '240', '70', ''],
  ['part-green', '2.2', 'MS24.1234.20.02.02', 'Sheet', 'S235', '3', '750', '89.4', ''],
  ['part', '2.3', 'MS24.1234.20.02.03', 'Sheet', 'S235', '3', '750', '30', ''],
  ['part', '2.4', 'MS24.1234.20.02.04', 'Sheet', 'S235', '3', '750', '30', ''],
  ['part', '2.5', 'MS24.1234.20.02.05', 'Sheet', 'S235', '2', '207', '12', ''],
  ['part-group', '3', 'MS24.1234.20.03', '1010x30x3mm', 'S235', '30', '1010', '1010', 'R=3 K=0,5'],
  ['part', '3.1', 'MS24.1234.20.03.01', 'Sheet', 'S235', '3', '1010', '30', ''],
  ['part', '3.2', 'MS24.1234.20.03.02', 'Sheet', 'S235', '3', '1004', '30', ''],
  ['part', '3.3', 'MS24.1234.20.03.03', 'Sheet', 'S235', '2', '1004', '12', ''],
];

const emptyRows = 16;
let html = '';

parts.forEach(([icon, id, ...cells]) => {
  const isGroup = icon === 'part-main' || icon === 'part-group';
  html += `<tr><td><div class="id-cell"><svg><use href="#${icon}"/></svg>${id}</div></td>`;
  html += cells.map((cell) => `<td>${cell}</td>`).join('');
  html += isGroup ? '<td></td><td class="done flag">|</td>' : '<td class="done">D:\\P...</td><td class="done"></td>';
  html += '<td></td></tr>';
});

html += `<tr>${'<td></td>'.repeat(11)}</tr>`.repeat(emptyRows);
document.getElementById('rows').innerHTML = html;
```
